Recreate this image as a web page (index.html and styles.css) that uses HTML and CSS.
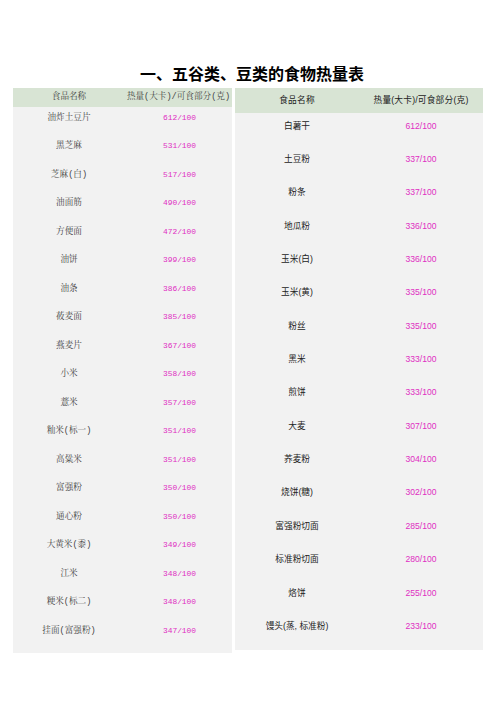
FILE: index.html
```html
<!DOCTYPE html>
<html lang="zh-CN">
<head>
<meta charset="utf-8">
<title>五谷类、豆类的食物热量表</title>
<link rel="stylesheet" href="styles.css">
</head>
<body>
<div class="page">
  <h1 class="title">一、五谷类、豆类的食物热量表</h1>
  <div class="tables">
    <div class="tbl tbl-left">
      <div class="thead"><span>食品名称</span><span>热量(大卡)/可食部分(克)</span></div>
      <div class="tbody">
        <div class="row"><span>油炸土豆片</span><span class="num">612/100</span></div>
        <div class="row"><span>黑芝麻</span><span class="num">531/100</span></div>
        <div class="row"><span>芝麻(白)</span><span class="num">517/100</span></div>
        <div class="row"><span>油面筋</span><span class="num">490/100</span></div>
        <div class="row"><span>方便面</span><span class="num">472/100</span></div>
        <div class="row"><span>油饼</span><span class="num">399/100</span></div>
        <div class="row"><span>油条</span><span class="num">386/100</span></div>
        <div class="row"><span>莜麦面</span><span class="num">385/100</span></div>
        <div class="row"><span>燕麦片</span><span class="num">367/100</span></div>
        <div class="row"><span>小米</span><span class="num">358/100</span></div>
        <div class="row"><span>薏米</span><span class="num">357/100</span></div>
        <div class="row"><span>籼米(标一)</span><span class="num">351/100</span></div>
        <div class="row"><span>高粱米</span><span class="num">351/100</span></div>
        <div class="row"><span>富强粉</span><span class="num">350/100</span></div>
        <div class="row"><span>通心粉</span><span class="num">350/100</span></div>
        <div class="row"><span>大黄米(黍)</span><span class="num">349/100</span></div>
        <div class="row"><span>江米</span><span class="num">348/100</span></div>
        <div class="row"><span>粳米(标二)</span><span class="num">348/100</span></div>
        <div class="row"><span>挂面(富强粉)</span><span class="num">347/100</span></div>
      </div>
    </div>
    <div class="tbl tbl-right">
      <div class="thead"><span>食品名称</span><span>热量(大卡)/可食部分(克)</span></div>
      <div class="tbody">
        <div class="row"><span>白薯干</span><span class="num">612/100</span></div>
        <div class="row"><span>土豆粉</span><span class="num">337/100</span></div>
        <div class="row"><span>粉条</span><span class="num">337/100</span></div>
        <div class="row"><span>地瓜粉</span><span class="num">336/100</span></div>
        <div class="row"><span>玉米(白)</span><span class="num">336/100</span></div>
        <div class="row"><span>玉米(黄)</span><span class="num">335/100</span></div>
        <div class="row"><span>粉丝</span><span class="num">335/100</span></div>
        <div class="row"><span>黑米</span><span class="num">333/100</span></div>
        <div class="row"><span>煎饼</span><span class="num">333/100</span></div>
        <div class="row"><span>大麦</span><span class="num">307/100</span></div>
        <div class="row"><span>荞麦粉</span><span class="num">304/100</span></div>
        <div class="row"><span>烧饼(糖)</span><span class="num">302/100</span></div>
        <div class="row"><span>富强粉切面</span><span class="num">285/100</span></div>
        <div class="row"><span>标准粉切面</span><span class="num">280/100</span></div>
        <div class="row"><span>烙饼</span><span class="num">255/100</span></div>
        <div class="row"><span>馒头(蒸, 标准粉)</span><span class="num">233/100</span></div>
      </div>
    </div>
  </div>
</div>
</body>
</html>
```
FILE: styles.css
```css
html, body {
  margin: 0;
  padding: 0;
  background: #ffffff;
}

.page {
  width: 496px;
  padding-top: 63px;
}

.title {
  margin: 0 0 5px 0;
  padding-left: 8px;
  height: 20px;
  line-height: 20px;
  font-family: "Noto Sans CJK SC", sans-serif;
  font-weight: 700;
  font-size: 16px;
  color: #000000;
  text-align: center;
}

.tables {
  display: flex;
  align-items: flex-start;
  gap: 3px;
  padding-left: 13px;
}

.tbl .thead,
.tbl .row {
  display: grid;
  text-align: center;
}

.thead {
  background: #d8e4d4;
}

.tbody {
  background: #f2f2f2;
}

/* left table: Song-style look */
.tbl-left {
  width: 219px;
  font-family: "Liberation Mono", "Noto Serif CJK SC", "Noto Sans CJK SC", monospace;
  font-size: 8.6px;
  color: #444444;
}

.tbl-left .thead,
.tbl-left .row {
  grid-template-columns: 112px 107px;
}

.tbl-left .thead {
  height: 18.5px;
  line-height: 18.5px;
}

.tbl-left .tbody {
  padding-bottom: 5px;
}

.tbl-left .row {
  height: 28.5px;
  box-sizing: border-box;
  padding-top: 4px;
  line-height: 14px;
}

.tbl-left .num {
  font-family: "Liberation Mono", monospace;
  font-size: 7.9px;
  color: #e02ec2;
  padding-left: 2px;
}

/* right table: sans look */
.tbl-right {
  width: 248px;
  font-family: "Liberation Sans", "Noto Sans CJK SC", sans-serif;
  font-size: 8.7px;
  color: #222222;
}

.tbl-right .thead,
.tbl-right .row {
  grid-template-columns: 124px 124px;
}

.tbl-right .thead {
  height: 25px;
  line-height: 25px;
  letter-spacing: 0.2px;
}

.tbl-right .tbody {
  padding-bottom: 3.4px;
}

.tbl-right .row {
  height: 33.35px;
  box-sizing: border-box;
  padding-top: 5.7px;
  line-height: 14px;
}

.tbl-right .num {
  font-size: 8.6px;
  color: #e02ec2;
}
```
